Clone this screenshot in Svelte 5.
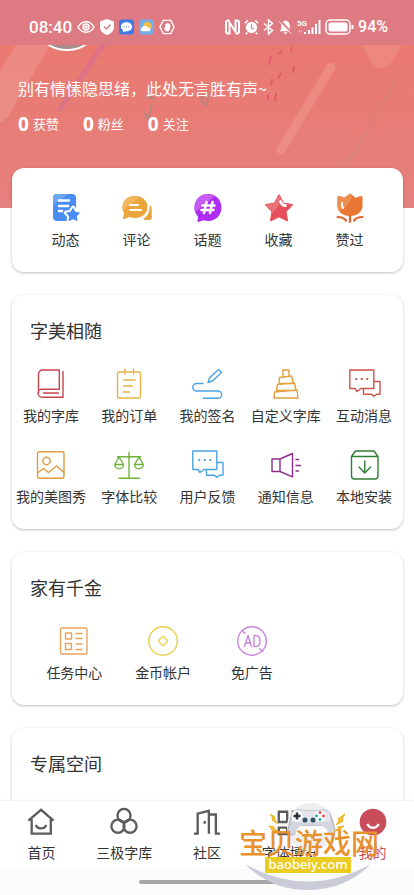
<script>
  const stats = [
    { value: 0, label: '获赞' },
    { value: 0, label: '粉丝' },
    { value: 0, label: '关注' }
  ];

  const shortcuts = [
    { label: '动态', icon: 'feed' },
    { label: '评论', icon: 'comment' },
    { label: '话题', icon: 'topic' },
    { label: '收藏', icon: 'star' },
    { label: '赞过', icon: 'tulip' }
  ];

  const fontTools = [
    { label: '我的字库', icon: 'book', color: '#c4474f' },
    { label: '我的订单', icon: 'order', color: '#e3b44a' },
    { label: '我的签名', icon: 'sign', color: '#4ba3df' },
    { label: '自定义字库', icon: 'tower', color: '#e2a03c' },
    { label: '互动消息', icon: 'chat', color: '#d05347' },
    { label: '我的美图秀', icon: 'image', color: '#dd9c42' },
    { label: '字体比较', icon: 'scale', color: '#6fb43c' },
    { label: '用户反馈', icon: 'chat', color: '#4ba3df' },
    { label: '通知信息', icon: 'horn', color: '#8d2d8c' },
    { label: '本地安装', icon: 'install', color: '#2f7f35' }
  ];

  const coinTools = [
    { label: '任务中心', icon: 'task', color: '#e8a45c' },
    { label: '金币帐户', icon: 'coin', color: '#ead04e' },
    { label: '免广告', icon: 'noad', color: '#cb85dd' }
  ];

  const tabs = [
    { label: '首页', icon: 'home' },
    { label: '三极字库', icon: 'rings' },
    { label: '社区', icon: 'door' },
    { label: '字体博览', icon: 'grid' },
    { label: '我的', icon: 'me' }
  ];

  let activeTab = $state('我的');

  // All icons are drawn on a 30x30 canvas
  const icons = {
    feed: `<rect x="2" y="1" width="23" height="27" rx="4" fill="#4a8df5"/><path d="M2 12V5a4 4 0 0 1 4-4h11z" fill="#6fa7f8"/>
      <path d="M8 7.500h10M8 13h9M8 18h3" stroke="#fff" stroke-width="2.600"/>
      <path d="M22 14.500l2.400 4.300 4.800.9-3.400 3.600.7 4.900-4.500-1.900-4.500 1.900.7-4.900-3.400-3.600 4.800-.9z" fill="#4a8df5" stroke="#fff" stroke-width="4"/>
      <path d="M22 14.500l2.400 4.300 4.800.9-3.400 3.600.7 4.900-4.500-1.900-4.500 1.900.7-4.900-3.400-3.600 4.800-.9z" fill="#4a8df5"/>`,
    comment: `<path d="M28.500 13.500c1 5 .3 8 .7 12-2 1.300-4 1-7 .6 4-2.500 6-6 6.300-12.600z" fill="#e9a33b" stroke="#e9a33b"/>
      <path d="M13 3c7 0 12.500 4.600 12.500 11S20 25 13 25c-2 0-4-.3-5.500-1L2 26c-.6.200-1-.3-.9-1l1-5C.8 18.300.5 16.200.5 14 .5 7.600 6 3 13 3z" fill="#eaa53d"/>
      <path d="M.5 14C.5 7.600 6 3 13 3l5 .7C12 9 8 12 1 17z" fill="#f0b659"/><path d="M8 12h8M8 17h11" stroke="#fff" stroke-width="2.200"/>`,
    topic: `<path d="M15 1c7.700 0 13.500 5.800 13.500 13.500S22.700 28 15 28c-1.500 0-3-.3-4.500-.8L5.500 29c-.7.200-1.200-.3-1-1l.5-4.300C2.500 21 1.500 18 1.500 14.500 1.500 6.800 7.300 1 15 1z" fill="#ae2df0"/>
      <path d="M2 19a14 14 0 0 1-.5-4.500C1.500 6.800 7.300 1 15 1c3 0 5 .8 7 2C15 8 10 14 2 19z" fill="#c65cf2"/>
      <path d="M13.500 9L11 20M19.500 9L17 20M9.500 12.500h12M8.500 17h12" stroke="#fff" stroke-width="2.600"/>`,
    star: `<path d="M15 2l4.200 8.200 9 1.500-6.400 6.700 1.500 9.100L15 23.500l-8.300 4 1.500-9.100-6.400-6.700 9-1.500z" fill="#e6505a" stroke="#e6505a" stroke-width="1.500"/>
      <path d="M15 2l3 6-11 14 1.200-3.600-6.400-6.700 9-1.500z" fill="#ec727a"/><path d="M16.500 8.500c1 3 2.500 4 5 4" stroke="#fff" stroke-width="2.800"/>`,
    tulip: `<path d="M2.500 3.500C5 2.700 7 3.500 9 5l6-4.500L21 5c2-1.500 4-2.300 6.500-1.500v9c0 6-5 10.500-12.500 10.500S2.500 18.500 2.500 12.500z" fill="#e97731"/>
      <path d="M2.500 3.500C5 2.700 7 3.500 9 5l6-4.500 2 1.500C16 10 10 16 4 18c-1-2-1.500-3.500-1.500-5.500z" fill="#ee8d50"/>
      <path d="M7 10c-.3 2 0 3.300 1 5" stroke="#fff" stroke-width="2"/><path d="M15 22v7M2.500 24c4 0 7 1.500 8.500 3.500M27.500 24c-4 0-7 1.500-8.500 3.500" stroke="#e5652f" stroke-width="2.200"/>`,
    book: `<path d="M23.300 20.300V1H6.500a4 4 0 0 0-4 4v19M23.300 20.300H6a4 4 0 0 0 0 8h21V2.500M7.500 24h15"/>`,
    order: `<rect x="3.500" y="3" width="23" height="26" rx="1.500"/><path d="M11 0v5M19.500 0v5M9.500 11H21M9.500 17h9M9.500 23h6"/>`,
    sign: `<path d="M16 13.500l1.500-4.500 9-8.500 3 3-9 8.500zM11 14.500H4.500a3.700 3.700 0 0 0 0 7.500H26a3.600 3.600 0 0 1 0 7.300H11.500"/>`,
    tower: `<path d="M12 7.500V1h6v6M8 14.500l.5-6L20.500 7l2 7.500zM5.500 21.500l1-6 17-1.500 1.500 7.500zM3 29l.5-6 22.500-2 1 8z"/>`,
    chat: `<path d="M.8 1h24v18.500H12l-4 3-2-3H.8zM24.800 12.500H31v12.700h-3.500l-2.500 2-3-2h-7.500v-5.700"/><path d="M7 10h.5M12.500 10h.5M18 10h.5" stroke-width="1.800"/>`,
    image: `<rect x="1.500" y="1.700" width="26.500" height="26.500" rx="2"/><circle cx="10.500" cy="11" r="3.700"/><path d="M1.500 23l6-4.500 5 4 8-6.500 7.500 6.500"/>`,
    scale: `<path d="M15 2.500V28M5 28.200h20.500M3.500 6.800h23M5 7L.8 14.500M5 7l4.500 7.500M25 7l-4.500 7.500M25 7l4.300 7.500M.8 14.500h8.700a4.300 4.300 0 0 1-8.700 0zM20.500 14.500h8.700a4.300 4.300 0 0 1-8.700 0z"/>`,
    horn: `<path d="M1 9h8v12.500H1zM9 9l12.500-5.500v23.300L9 21.500M25 9.500h2.500M25 15.500h4.500M25 21h2.500"/>`,
    install: `<path d="M2.500 6.500h26.500V26a3 3 0 0 1-3 3H5.500a3 3 0 0 1-3-3zM2.500 6.500l4-5.500h18.500l4 5.500M15.800 11v12M10 17l5.800 6 5.800-6"/>`,
    task: `<rect x="1.500" y="2" width="26.500" height="26" rx="1.500"/><rect x="6.500" y="7" width="6" height="6"/><rect x="6.500" y="17.500" width="6" height="6"/><path d="M17 7.500h6M17 12.500h6M17 18h6M17 23.500h6"/>`,
    coin: `<circle cx="15" cy="15" r="14.300"/><rect x="11.500" y="11.500" width="7" height="7" rx="1.500" transform="rotate(45 15 15)"/>`,
    noad: `<circle cx="15" cy="15" r="14.300"/><path d="M5 4.500l3 3M22.500 22.500l3 3M7.500 20.500l3.500-11 3.500 11M8.800 17h4.600M17 9.500v11h1.500c3 0 4.500-2.500 4.500-5.500s-1.500-5.500-4.500-5.500z"/>`,
    home: `<path d="M1.500 13.500L15 2l13.500 11.500M5 12v15.500h20.500V12M9.500 18c1.500 5 9.500 5 11 0"/>`,
    rings: `<circle cx="15" cy="8" r="7"/><circle cx="8.500" cy="19.500" r="7"/><circle cx="21.500" cy="19.500" r="7"/>`,
    door: `<path d="M1 27.500h4V6l12-3v24.500M17 7h7.500v20.500H29M12.500 14v3"/>`,
    grid: `<path d="M3 4h9v11H3zM3 21h9v7H3zM18 4h9v8h-9zM18 18h9v10h-9z"/>`,
    me: `<circle cx="15" cy="15" r="14.300" fill="#c94d5a" stroke="none"/><path d="M9 17c2 5.500 10 5.500 12 0" stroke="#fff"/>`
  };
</script>

{#snippet icon(name)}
  <svg class="icon" viewBox="0 0 30 30" aria-hidden="true">{@html icons[name]}</svg>
{/snippet}

<div class="app">
  <header class="status">
    <div class="group left">
      <span class="time">08:40</span>
      <svg width="18" height="16" viewBox="0 0 18 16" class="line">
        <path d="M1 8c4-7 12-7 16 0-4 7-12 7-16 0z" /><circle cx="9" cy="8" r="3" /><circle cx="9" cy="8" r="1" />
      </svg>
      <svg width="14" height="16" viewBox="0 0 14 16">
        <path d="M7 0l7 2.500V8c0 4-3 6.500-7 8-4-1.500-7-4-7-8V2.500z" fill="#fff" />
        <path d="M4 7.500L6.500 10l4-4.500" fill="none" stroke="#dd7a82" stroke-width="1.500" />
      </svg>
      <svg width="15" height="16" viewBox="0 0 16 16">
        <rect width="16" height="16" rx="3.500" fill="#3f7be8" />
        <path d="M8 3c3.500 0 6 2 6 4.800s-2.500 4.800-6 4.800l-4 .8.700-1.800C3 10.700 2 9.500 2 7.800 2 5 4.500 3 8 3z" fill="#fff" />
        <path d="M5 8h1M7.500 8h1M10 8h1" stroke="#3f7be8" stroke-width="1.300" />
      </svg>
      <svg width="15" height="16" viewBox="0 0 16 16">
        <rect width="16" height="16" rx="3.500" fill="#73aee9" />
        <circle cx="9" cy="7" r="4.500" fill="#f6bd4a" />
        <path d="M3.500 12.500a2.300 2.300 0 0 1 .5-4.500c1-2 4-2 5 .3 3-.8 4.500 3 2 4.200z" fill="#fff" />
      </svg>
      <svg width="16" height="16" viewBox="0 0 17 16" class="line">
        <path d="M4.500 1h8L16 8l-3.500 7h-8L1 8z" />
        <path d="M4.800 8.300l2 3.700q2 1.300 4.200 0l1-3.500V5.200h-1V4.300h-1.100V3.700H8.700v.6H7.600v.8h-1V9z" fill="#fff" stroke="none" />
      </svg>
    </div>
    <div class="group">
      <svg width="15" height="16" viewBox="0 0 15 16">
        <path d="M4.500 1.500H3a2 2 0 0 0-2 2v9a2 2 0 0 0 2 2h1.500V3.500l6 9v-11H12a2 2 0 0 1 2 2v9a2 2 0 0 1-2 2h-1.500" fill="none" stroke="#fff" stroke-width="2" />
      </svg>
      <svg width="15" height="16" viewBox="0 0 16 16">
        <circle cx="8" cy="8.500" r="6" fill="#fff" />
        <path d="M1 4l3-3M15 4l-3-3M3.500 14l-1.500 1.500M12.500 14l1.500 1.500" stroke="#fff" stroke-width="1.800" />
        <path d="M8 5v4l2.500 1.500" fill="none" stroke="#dd7a82" stroke-width="1.300" />
      </svg>
      <svg width="11" height="16" viewBox="0 0 11 16" class="line"><path d="M1 4.500l8.500 7L5.500 15V1l4 3.500-8.500 7" /></svg>
      <svg width="15" height="16" viewBox="0 0 16 16">
        <path d="M8 1c3.500.7 4.500 3 4.500 6v3l1.500 2.500H2L3.500 10V7c0-3 1-5.300 4.500-6zM6 13.500h4L8 16z" fill="#fff" />
        <path d="M1 0l14 15" stroke="#dd7a82" stroke-width="2.500" /><path d="M1 2l13 13" stroke="#fff" />
      </svg>
      <svg width="24" height="16" viewBox="0 0 24 16">
        <text x="0" y="7" class="net">5G</text>
        <path d="M8 15v-2M12 15v-4M15.500 15V8.500M19 15V5M22.500 15V1" stroke="#fff" stroke-width="2" />
        <path d="M1 12.500h4M2.500 11v3" stroke="#f4a3ae" />
      </svg>
      <svg width="29" height="16" viewBox="0 0 29 16">
        <rect x="1" y="1" width="24" height="14" rx="4" fill="none" stroke="#fff" stroke-width="1.500" />
        <rect x="3.500" y="3.500" width="19" height="9" rx="2" fill="#fff" />
        <path d="M27.500 6v4" stroke="#fff" stroke-width="2" />
      </svg>
      <span class="battery">94%</span>
    </div>
  </header>

  <main>
    <section class="hero">
      <svg class="decor" viewBox="0 0 414 163" preserveAspectRatio="xMidYMin slice" aria-hidden="true">
        <path d="M16 0h34L8 72 0 78V26z" fill="#fff" opacity=".13" />
        <path d="M103 0L60 64" stroke="#d9708f" stroke-width="5" stroke-linecap="round" opacity=".7" />
        <path d="M331 22L281 105" stroke="#f1968c" stroke-width="9" stroke-linecap="round" opacity=".6" />
        <path d="M362 0h40c-8 13-12 23-21 23S370 13 362 0z" fill="#f1968c" opacity=".5" />
        <path d="M397 34L346 122" stroke="#b58a80" opacity=".7" />
        <path d="M271 11l-2 9M282 5l-3 4M291 2l1 5M294 21l-1 7M281 28l-3 6M272 34l-1 6M268 50v5M276 48l-1 8" stroke="#dd4f66" stroke-width="2" opacity=".7" />
        <path d="M143 66l5 8 4-15M146 51l9 3M200 55q4-6 8-4l-1 9z" stroke="#a88780" fill="none" stroke-width="2" opacity=".7" />
      </svg>
      <div class="avatar"></div>
      <p class="bio">别有情愫隐思绪，此处无言胜有声~</p>
      <ul class="stats">
        {#each stats as s}
          <li><b>{s.value}</b>{s.label}</li>
        {/each}
      </ul>
    </section>

    <section class="card quick">
      <div class="items padded five">
        {#each shortcuts as item}
          <button class="item filled">{@render icon(item.icon)}<span>{item.label}</span></button>
        {/each}
      </div>
    </section>

    <section class="card">
      <h2>字美相随</h2>
      <div class="items five">
        {#each fontTools as item}
          <button class="item" style="--c: {item.color}">{@render icon(item.icon)}<span>{item.label}</span></button>
        {/each}
      </div>
    </section>

    <section class="card">
      <h2>家有千金</h2>
      <div class="items padded four">
        {#each coinTools as item}
          <button class="item" style="--c: {item.color}">{@render icon(item.icon)}<span>{item.label}</span></button>
        {/each}
      </div>
    </section>

    <section class="card last">
      <h2>专属空间</h2>
    </section>
  </main>

  <footer>
    <nav>
      {#each tabs as tab}
        <button class="tab" class:active={activeTab === tab.label} onclick={() => (activeTab = tab.label)}>
          {@render icon(tab.icon)}<span>{tab.label}</span>
        </button>
      {/each}
    </nav>
    <div class="gesture"><i></i></div>

    <!-- Site badge floating over the tab bar -->
    <svg class="badge" viewBox="0 0 150 97">
      <circle cx="77" cy="29" r="24" fill="#eeeef0" />
      <path d="M11 66q63 35 126 0-26 26-63 26T11 66z" fill="#c9cbd8" />
      <path d="M58 15q5-5 13-2h12q8-3 13 2l5 17q0 5-4 5-3-1-8-9H67q-5 8-9 9-4 0-4-5z" fill="#d3d5df" stroke="#abaebd" />
      <path d="M66 28h23q4 3 6 8-18 3-34 0 2-5 5-8z" fill="#fff" />
      <path d="M58 15q5-5 13-2h12q8-3 13 2v9H58z" fill="#e4e5ec" />
      <circle cx="63" cy="18" r="5.500" fill="#fff" /><path d="M63 14.500v7M59.500 18h7" stroke="#26323d" stroke-width="2.500" />
      <circle cx="86" cy="18" r="5.500" fill="#fff" />
      <circle cx="86" cy="14.500" r="1.400" fill="#e7484f" /><circle cx="89.500" cy="18" r="1.400" fill="#e7484f" />
      <circle cx="86" cy="21.500" r="1.400" fill="#22a6b3" /><circle cx="82.500" cy="18" r="1.400" fill="#22a6b3" />
      <circle cx="71" cy="22" r="2.500" fill="#2b5364" /><circle cx="79" cy="22" r="2.500" fill="#2b5364" />
      <path d="M36 16l5 3-1 2 4 5-6-4 1-2zM35 28l5 1v2l4 2-6-1-1-2zM111 16l-7 5 1 2-3 4 7-4-1-2zM110 28l-6 1v2l-4 2 7-1v-2z" fill="#f6c52f" stroke="#e9ae1e" />
      <text x="5" y="56" class="badge-name">宝贝游戏网</text>
      <rect x="31" y="59" width="86" height="16" fill="#eccb23" />
      <text x="74" y="71" class="badge-url">baobeiy.com</text>
    </svg>
  </footer>
</div>

<style>
  :global(body) {
    background: #fff;
  }

  .app {
    display: flex;
    flex-direction: column;
    height: 100vh;
    overflow: hidden;
    font-family: "Noto Sans CJK SC", "Noto Sans", sans-serif;
    color: #333;
  }

  button {
    border: 0;
    padding: 0;
    background: none;
    font: inherit;
    color: inherit;
    cursor: pointer;
  }

  /* Status bar */
  .status {
    display: flex;
    align-items: center;
    justify-content: space-between;
    box-sizing: border-box;
    height: 45px;
    flex-shrink: 0;
    padding: 8px 26px 0 29px;
    background: #dd7a82;
    color: #fff;
    font-family: Roboto, sans-serif;
    font-weight: 500;
  }

  .group {
    display: flex;
    align-items: center;
    gap: 4px;
  }

  .left {
    gap: 5px;
  }

  .line {
    fill: none;
    stroke: #fff;
    stroke-width: 1.5;
  }

  .time {
    font-size: 17px;
  }

  .battery {
    font-size: 16px;
  }

  .net {
    font-size: 8px;
    font-weight: 700;
    fill: #fff;
  }

  main {
    flex: 1;
    min-height: 0;
    overflow: hidden;
  }

  /* Profile header */
  .hero {
    position: relative;
    box-sizing: border-box;
    height: 163px;
    padding: 0 18px;
    overflow: hidden;
    background: linear-gradient(#ea7970, #e5817d);
    color: #fff;
  }

  .decor {
    position: absolute;
    inset: 0;
    width: 100%;
    height: 100%;
  }

  .avatar {
    position: relative;
    box-sizing: border-box;
    width: 72px;
    height: 72px;
    margin: -66px 0 0 13px;
    border: 2px solid #fff;
    border-radius: 50%;
    background: #a98c8c;
  }

  .bio {
    position: relative;
    margin: 25px 0 11px;
    font-size: 16px;
    line-height: 24px;
  }

  .stats {
    position: relative;
    display: flex;
    gap: 24px;
    margin: 0;
    padding: 0;
    list-style: none;
    font-size: 13px;
    line-height: 26px;
  }

  .stats li {
    display: flex;
    gap: 4px;
  }

  .stats b {
    font-family: "Noto Sans", sans-serif;
    font-size: 19px;
  }

  /* Cards */
  .card {
    position: relative;
    margin: 0 11px 23px 12px;
    padding: 21px 0 23px;
    border-radius: 12px;
    background: #fff;
    box-shadow: 0 1px 3px rgba(0, 0, 0, 0.25);
  }

  .quick {
    margin-top: -40px;
    padding-top: 25px;
  }

  .last {
    min-height: 120px;
  }

  h2 {
    margin: 0 18px 25px;
    font-size: 18px;
    font-weight: 400;
    line-height: 28px;
  }

  .items {
    display: grid;
    row-gap: 25px;
  }

  .padded {
    padding: 0 18px;
  }

  .five {
    grid-template-columns: repeat(5, 1fr);
  }

  .four {
    grid-template-columns: repeat(4, 1fr);
  }

  .item {
    display: flex;
    flex-direction: column;
    align-items: center;
    gap: 6px;
    min-width: 0;
    font-size: 14px;
    line-height: 20px;
    white-space: nowrap;
  }

  .icon {
    width: 30px;
    height: 30px;
    overflow: visible;
    fill: none;
    stroke: var(--c);
    stroke-width: 1.4;
    stroke-linecap: round;
    stroke-linejoin: round;
  }

  .filled .icon {
    stroke: none;
  }

  /* Bottom tabs */
  footer {
    position: relative;
    flex-shrink: 0;
    background: #fff;
    box-shadow: 0 0 2px rgba(0, 0, 0, 0.12);
  }

  nav {
    display: grid;
    grid-template-columns: repeat(5, 1fr);
    padding: 7px 0;
  }

  .tab {
    display: flex;
    flex-direction: column;
    align-items: center;
    gap: 6px;
    font-size: 14px;
    line-height: 20px;
    white-space: nowrap;
  }

  .tab .icon {
    width: 28px;
    height: 28px;
    stroke: #5c5c5c;
    stroke-width: 2.5;
    stroke-linecap: butt;
    stroke-linejoin: miter;
  }

  .active {
    color: #c94d5a;
  }

  .gesture {
    display: flex;
    justify-content: center;
    align-items: center;
    height: 26px;
    background: #fbfbfb;
  }

  .gesture i {
    width: 33%;
    height: 4px;
    border-radius: 2px;
    background: #a6a6a6;
  }

  .badge {
    position: absolute;
    right: 30px;
    bottom: 0;
    width: 150px;
    height: 97px;
    pointer-events: none;
  }

  .badge-name {
    font-size: 28px;
    font-weight: 500;
    fill: #e8912d;
  }

  .badge-url {
    font-family: "Noto Sans", sans-serif;
    font-size: 13px;
    font-weight: 500;
    text-anchor: middle;
    fill: #fff;
  }
</style>
